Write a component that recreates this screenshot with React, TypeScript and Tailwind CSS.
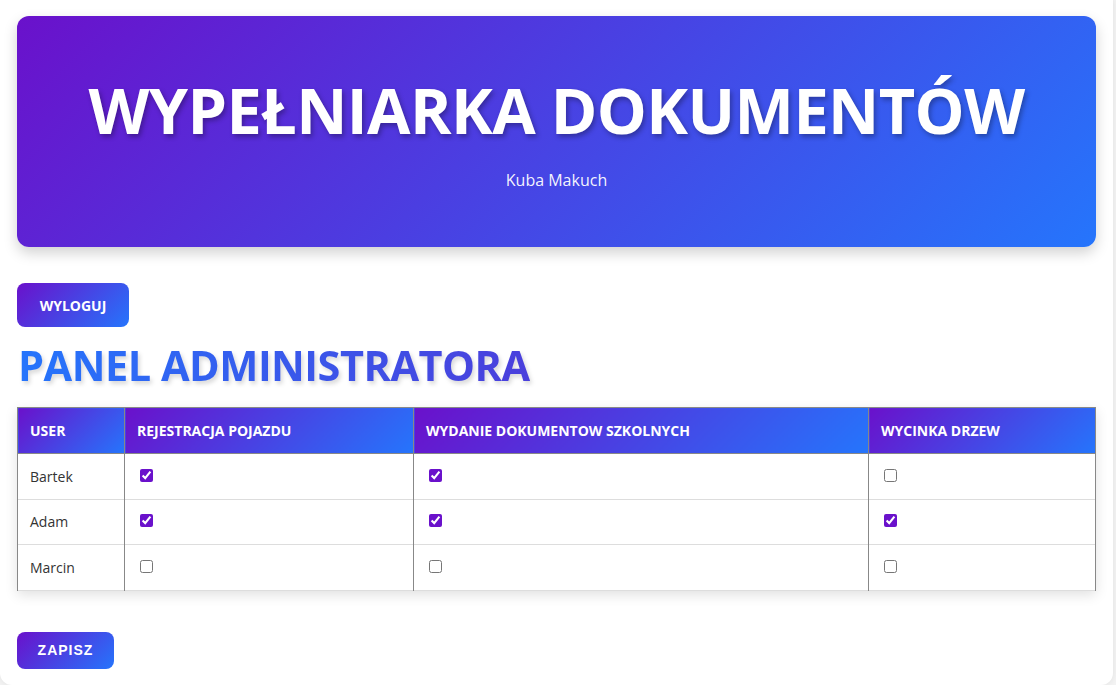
import { useState } from "react";

const services = ["Rejestracja pojazdu", "Wydanie dokumentow szkolnych", "Wycinka drzew"];

const initialUsers = [
  { name: "Bartek", perms: [true, true, false] },
  { name: "Adam", perms: [true, true, true] },
  { name: "Marcin", perms: [false, false, false] },
];

const font = "font-['Open_Sans','Noto_Sans',sans-serif]";

export default function App() {
  const [users, setUsers] = useState(initialUsers);

  const toggle = (u: number, p: number) => {
    setUsers((prev) =>
      prev.map((user, i) =>
        i === u ? { ...user, perms: user.perms.map((v, j) => (j === p ? !v : v)) } : user
      )
    );
  };

  return (
    <div className={`min-h-screen bg-[#f3f3f3] ${font}`}>
      <div className="w-[1113px] h-[685px] bg-white rounded-br-xl rounded-bl-xl shadow-[0_0_6px_rgba(0,0,0,0.08)] px-[17px] pt-4">
        {/* Header */}
        <header className="h-[231px] rounded-xl bg-[linear-gradient(135deg,#6a11cb,#2575fc)] shadow-[0_6px_14px_rgba(0,0,0,0.18)] flex flex-col items-center pt-[62px] text-white">
          <h1 className="text-[63px] leading-none font-bold tracking-[-0.6px] [text-shadow:2px_3px_5px_rgba(0,0,0,0.3)]">
            WYPEŁNIARKA DOKUMENTÓW
          </h1>
          <p className="mt-[27px] text-[16px] text-white/95">Kuba Makuch</p>
        </header>

        {/* Logout */}
        <button className="mt-[36px] w-[112px] h-[44px] rounded-lg bg-[linear-gradient(135deg,#6a11cb,#2575fc)] text-white text-[14px] font-bold">
          WYLOGUJ
        </button>

        <h2 className="mt-[12px] ml-px text-[41.5px] leading-[52px] font-bold tracking-[-0.5px] bg-[linear-gradient(90deg,#2575fc,#4a3fdc)] bg-clip-text text-transparent w-fit [filter:drop-shadow(2px_3px_2px_rgba(0,0,0,0.15))]">
          PANEL ADMINISTRATORA
        </h2>

        {/* Table */}
        <table className="mt-[16px] w-full border-collapse shadow-[0_4px_12px_rgba(0,0,0,0.12)] table-fixed">
          <colgroup>
            <col className="w-[107px]" />
            <col className="w-[289px]" />
            <col className="w-[455px]" />
            <col />
          </colgroup>
          <thead>
            <tr className="h-[46px]">
              <th className="border border-[#888] bg-[linear-gradient(135deg,#6a11cb,#2575fc)] text-left pl-3 text-white text-[14px] font-bold">
                USER
              </th>
              {services.map((s) => (
                <th
                  key={s}
                  className="border border-[#888] bg-[linear-gradient(135deg,#6a11cb,#2575fc)] text-left pl-3 text-white text-[14px] font-bold uppercase"
                >
                  {s}
                </th>
              ))}
            </tr>
          </thead>
          <tbody>
            {users.map((user, u) => (
              <tr key={user.name} className="h-[45.5px] border-b border-[#ddd]">
                <td className="border-x border-[#888] pl-3 text-[14px] text-[#333]">{user.name}</td>
                {user.perms.map((checked, p) => (
                  <td key={p} className="border-x border-[#888] pl-[15px] align-middle">
                    <input
                      type="checkbox"
                      checked={checked}
                      onChange={() => toggle(u, p)}
                      className="accent-[#6a11cb] block w-[13px] h-[13px] m-0 -mt-[2px]"
                    />
                  </td>
                ))}
              </tr>
            ))}
          </tbody>
        </table>

        <button className="mt-[41px] w-[97px] h-[37px] rounded-lg bg-[linear-gradient(135deg,#6a11cb,#2575fc)] text-white text-[14px] font-bold tracking-[1px] font-['Liberation_Sans',Arial,sans-serif]">
          ZAPISZ
        </button>
      </div>
    </div>
  );
}
